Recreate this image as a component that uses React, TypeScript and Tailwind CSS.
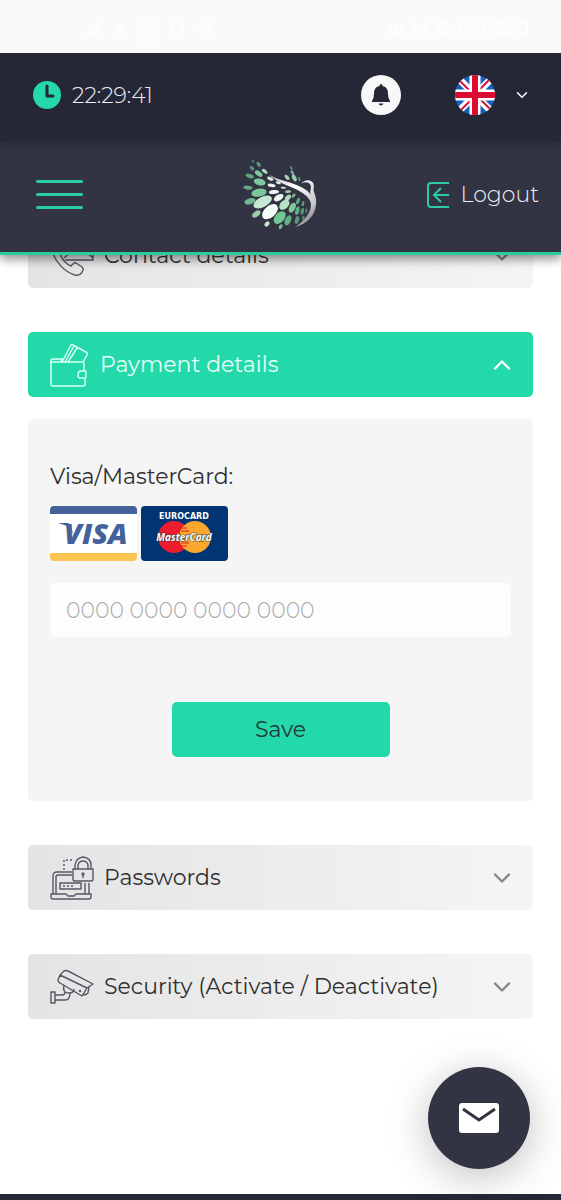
import type { ReactNode } from "react";
import { AlarmClock, BellOff, ChevronDown, ChevronUp, Eye, MapPin, Shield, Signal, Wifi } from "lucide-react";

// cx, cy, rx, ry, rotation, fill
const feathers: [number, number, number, number, number, string][] = [
  [69, 49, 5, 3, 55, "#4f7d6e"],
  [86, 58, 8, 5, 50, "#5e9c7e"],
  [66, 70, 8, 5, 40, "#5b8f7b"],
  [104, 79, 10, 5, 40, "#a9d9ba"],
  [86, 86, 13, 7, 35, "#7fc79d"],
  [59, 93, 13, 6, 20, "#5da581"],
  [121, 101, 10, 5, 25, "#d9efe0"],
  [89, 111, 18, 10, 15, "#7ccb9c"],
  [54, 128, 14, 6, 5, "#66a787"],
  [125, 121, 12, 5, 10, "#e8f5ec"],
  [145, 113, 8, 4, 15, "#e4eee8"],
  [160, 128, 8, 3, 5, "#d4e5da"],
  [87, 143, 23, 12, -10, "#79c899"],
  [132, 141, 15, 6, -5, "#f1faf4"],
  [60, 169, 17, 9, -15, "#6db991"],
  [174, 140, 9, 4, -5, "#a5cdb5"],
  [146, 158, 16, 9, -30, "#eaf7ee"],
  [98, 171, 30, 15, -28, "#c5e9d1"],
  [174, 158, 11, 7, -45, "#aedabc"],
  [163, 179, 18, 12, -45, "#b4e2c3"],
  [120, 200, 28, 17, -42, "#f5fdf7"],
  [79, 207, 14, 8, -35, "#9bcdad"],
  [191, 152, 7, 4, -50, "#84b697"],
  [187, 188, 16, 9, -62, "#82c79a"],
  [204, 168, 10, 5, -70, "#67a981"],
  [149, 218, 22, 14, -48, "#72c693"],
  [111, 237, 9, 6, -45, "#c3e6cf"],
  [202, 197, 13, 6, -75, "#5faf7f"],
  [219, 176, 8, 4, -80, "#5b9b76"],
  [174, 226, 16, 9, -65, "#63ae82"],
  [152, 245, 8, 5, -60, "#76bc91"],
  [217, 199, 10, 5, -80, "#5a9876"],
  [229, 197, 8, 3, -85, "#4d8269"],
  [201, 225, 12, 6, -75, "#59977a"],
  [220, 219, 7, 4, -80, "#4f8a6d"],
  [184, 69, 6, 3, 55, "#62917c"],
  [187, 83, 8, 4, 60, "#80af95"],
  [171, 97, 9, 5, 50, "#a5d2b6"],
  [193, 99, 11, 6, 65, "#99d0ae"],
  [208, 102, 7, 3, 75, "#63997d"],
];

function Logo() {
  return (
    <svg viewBox="36 42 228 216" className="h-[72px] w-[76px]" role="img" aria-label="Home">
      <defs>
        <linearGradient id="wing" x1="0" y1="0" x2="1" y2="1">
          <stop offset="0" stopColor="#c7c7cd" />
          <stop offset=".4" stopColor="#fff" />
          <stop offset=".75" stopColor="#c8c5cb" />
          <stop offset="1" stopColor="#444552" />
        </linearGradient>
      </defs>
      {feathers.map(([cx, cy, rx, ry, angle, fill]) => (
        <ellipse key={`${cx}-${cy}`} cx={cx} cy={cy} rx={rx} ry={ry} fill={fill} transform={`rotate(${angle} ${cx} ${cy})`} />
      ))}
      <path
        fill="url(#wing)"
        d="M118 88C135 103 165 108 192 117C218 126 237 138 242 150C238 138 246 128 241 119C236 110 224 110 214 116C222 104 240 102 248 112C255 122 249 132 252 142C258 155 261 172 256 192C250 214 232 236 196 246C222 228 242 206 243 180C243 160 222 143 190 129C160 117 132 106 118 88Z"
      />
    </svg>
  );
}

function PhoneIcon() {
  return (
    <svg viewBox="0 0 44 44" className="h-11 w-11" fill="none" stroke="#565765" strokeWidth="1.4" strokeLinejoin="round">
      <path d="M2 17c3 10 12 21 23 24 5 1 7-2 8-5 1-1 0-2-1-3l-6-4c-2-1-3 1-5 3-5-2-9-7-11-12l3-4-4-9c-5 1-8 4-7 10Z" />
      <path d="M14 4h29v22H15M14 24l9-8m20 8-9-8M15 5l14 13L42 5" />
    </svg>
  );
}

function WalletIcon() {
  return (
    <svg viewBox="0 0 40 44" className="h-11 w-10" fill="none" stroke="#d5fff3" strokeWidth="1.5" strokeLinejoin="round" strokeLinecap="round">
      <path d="M34 28v-7q0-2-2-2H1v22q0 2 2 2h30q2 0 2-2v-5" />
      <path d="M1 19v-2q0-1 2-1h9M12 19l9-17q1-1 2 0l13 7q2 1 1 3l-4 7M15 19l9-16M18 19l9-14M12 16l-1 3" />
      <path d="M30 28h5q1 0 1 1v5q0 1-1 1h-5q-2 0-2-3t2-4Z" />
    </svg>
  );
}

function LaptopLockIcon() {
  return (
    <svg viewBox="0 0 44 44" className="h-11 w-11" fill="none" stroke="#565765" strokeWidth="1.4" strokeLinejoin="round">
      <path d="M3 38V20q0-4 4-4h15M6 38V21q0-2 2-2h14M35 27v11m4-11v11M1 38h15l2 2h6l2-2h15v3q0 2-2 2H3q-2 0-2-2Z" />
      <path d="M10 27h21v6H10Z" />
      <path d="M13 30h12M14 14V4h10" strokeDasharray="2 2" />
      <path d="M23 13h20v10q0 2-2 2H25q-2 0-2-2ZM25 13V9q1-7 8-8 8 1 8 8v4M28 13V9q1-4 5-4t5 4v4" />
      <circle cx="33" cy="18" r="1" />
      <path d="M33 19v3" />
    </svg>
  );
}

function CameraIcon() {
  return (
    <svg viewBox="0 0 44 44" className="h-11 w-11" fill="none" stroke="#565765" strokeWidth="1.4" strokeLinejoin="round">
      <path d="M14 6q2-1 4 0l25 13-6 4L10 10l4-4ZM10 10l-2 5q0 2 2 3l22 13 5-8M39 22l-1 6q-2 2-5 2" />
      <path d="M14 20q-2 8 5 8 5 0 5-4M1 27h4v11H1ZM5 30h7q3 0 3-3M5 35h10q5 0 5-7" />
      <circle cx="30" cy="26" r=".5" />
    </svg>
  );
}

function UkFlag() {
  return (
    <svg viewBox="0 0 40 40" className="h-10 w-10" aria-hidden="true">
      <clipPath id="round">
        <circle cx="20" cy="20" r="20" />
      </clipPath>
      <g clipPath="url(#round)">
        <path fill="#1560bd" d="M0 0h40v40H0Z" />
        <path stroke="#fff" strokeWidth="7" d="m0 0 40 40M40 0 0 40" />
        <path stroke="#d9123a" strokeWidth="2" d="m0 1 19 19m21 19L21 20M39 0 20 19M1 40l19-19" />
        <path stroke="#fff" strokeWidth="11" d="M20 0v40M0 20h40" />
        <path stroke="#dc0b32" strokeWidth="6" d="M20 0v40M0 20h40" />
      </g>
    </svg>
  );
}

function VisaCard() {
  return (
    <svg viewBox="0 0 87 55" className="h-[55px] w-[87px] rounded" role="img" aria-label="Visa">
      <path fill="#fff" d="M0 0h87v55H0Z" />
      <path fill="#43619b" d="M0 0h87v8H0Z" />
      <path fill="#fbc550" d="M0 47h87v8H0Z" />
      <path fill="#43619b" d="M8 17h9q3 0 4 3l2 8-3-5q-3-4-12-6Z" />
      <text x="14" y="38" fontFamily="Open Sans, sans-serif" fontSize="29" fontWeight="800" fontStyle="italic" fill="#43619b">
        VISA
      </text>
    </svg>
  );
}

function MasterCard() {
  return (
    <svg viewBox="0 0 87 55" className="h-[55px] w-[87px] rounded" role="img" aria-label="MasterCard">
      <path fill="#003473" d="M0 0h87v55H0Z" />
      <text x="43" y="13" textAnchor="middle" fontFamily="DejaVu Sans, sans-serif" fontSize="8" fontWeight="700" fill="#fff">
        EUROCARD
      </text>
      <circle cx="33" cy="31" r="16" fill="#ed1c2e" />
      <circle cx="54" cy="31" r="16" fill="#faa82d" />
      <path stroke="#ed1c2e" d="M40 22h6m-6 3h8m-8 12h8m-8 3h6" />
      <text x="43" y="35" textAnchor="middle" fontFamily="Open Sans, sans-serif" fontSize="10" fontWeight="700" fontStyle="italic" fill="#fff" stroke="#30333b" strokeWidth="1" paintOrder="stroke">
        MasterCard
      </text>
    </svg>
  );
}

function Section({ icon, title, open = false }: { icon: ReactNode; title: string; open?: boolean }) {
  const Chevron = open ? ChevronUp : ChevronDown;
  return (
    <button
      type="button"
      aria-expanded={open}
      className={`flex h-[65px] w-full items-center gap-[10px] rounded-[5px] px-[22px] text-left text-[22px] font-normal ${
        open ? "bg-[#24d9a9] text-[#e6fff8]" : "bg-linear-to-r from-[#e4e4e4] to-[#f5f5f5] text-[#303030]"
      }`}
    >
      {icon}
      <span className="flex-1">{title}</span>
      <Chevron className={`-mr-[5px] h-7 w-7 ${open ? "text-white" : "text-[#858585]"}`} strokeWidth={2} />
    </button>
  );
}

export default function App() {
  return (
    <div className="flex min-h-screen flex-col bg-white font-['Montserrat','Inter',sans-serif] font-light">
      {/* Phone status bar */}
      <div className="relative z-20 flex h-[53px] items-end justify-between bg-[#fafafa] pr-8 pb-2 pl-20 text-white">
        <div className="flex items-center gap-3">
          <Signal className="h-5 w-5" />
          <Wifi className="h-4 w-4" />
          <div className="flex flex-col items-center text-[11px] leading-4 font-medium">
            <span>156</span>
            <span>K/s</span>
          </div>
          <Shield className="h-4 w-4" />
          <MapPin className="h-4 w-4" />
        </div>
        <div className="flex h-8 items-center gap-2">
          <Eye className="h-4 w-4" />
          <AlarmClock className="h-4 w-4" />
          <BellOff className="h-4 w-4" />
          <span className="rounded border border-white px-1 text-xs leading-3 font-medium">46</span>
          <span className="text-lg leading-5 font-medium">5:29</span>
        </div>
      </div>

      <header className="relative z-10 border-b-[3px] border-[#2bcb9f] bg-[#333443] shadow-[0_4px_10px_rgba(0,0,0,0.45)]">
        <div className="flex h-[88px] items-center bg-[#252736] pr-[30px] pb-1 pl-[33px] text-white shadow-[0_2px_8px_rgba(0,0,0,0.3)]">
          <svg viewBox="0 0 28 28" className="h-7 w-7" aria-hidden="true">
            <circle cx="14" cy="14" r="14" fill="#24d9a9" />
            <path d="M14 5v10h6" fill="none" stroke="#252736" strokeWidth="3" strokeLinecap="round" strokeLinejoin="round" />
          </svg>
          <time className="ml-[11px] text-[22px] text-[#eeeef4]">22:29:41</time>
          <button type="button" aria-label="Notifications" className="ml-auto flex h-10 w-10 items-center justify-center rounded-full bg-[#f8f8f8]">
            <svg viewBox="0 0 20 24" className="h-6 w-5" fill="#252736" aria-hidden="true">
              <path d="M10 1q1.500 0 1.500 2C16 4 17 7 17 11q0 4 2 7v1H1v-1q2-3 2-7c0-4 1-7 5.500-8Q8.500 1 10 1ZM7.500 20.500h5q-1 2-2.500 2t-2.500-2Z" />
            </svg>
          </button>
          <button type="button" aria-label="Language" className="ml-[54px] flex items-center gap-[18px]">
            <UkFlag />
            <ChevronDown className="h-[18px] w-[18px]" strokeWidth={2} />
          </button>
        </div>
        <div className="grid h-[111px] grid-cols-3 items-center px-[22px] pb-1">
          <button type="button" aria-label="Menu" className="ml-[14px] flex w-[47px] flex-col gap-[10px]">
            <span className="h-[3px] w-full rounded bg-[#29cda2]"></span>
            <span className="h-[3px] w-full rounded bg-[#29cda2]"></span>
            <span className="h-[3px] w-full rounded bg-[#29cda2]"></span>
          </button>
          <a href="#" className="justify-self-center">
            <Logo />
          </a>
          <a href="#" className="flex items-center gap-3 justify-self-end text-[22px] text-[#eeeef4]">
            <svg viewBox="0 0 22 26" className="h-[26px] w-[22px]" fill="none" stroke="#2bcca1" strokeWidth="2" aria-hidden="true">
              <path d="M22 1H4Q1 1 1 4v18q0 3 3 3h18M22 13H7m7-7-7 7 7 7" />
            </svg>
            Logout
          </a>
        </div>
      </header>

      <main className="-mt-8 flex flex-1 flex-col gap-11 px-7">
        <Section icon={<PhoneIcon />} title="Contact details" />
        <div className="flex flex-col gap-[22px]">
          <Section icon={<WalletIcon />} title="Payment details" open />
          <form className="flex flex-col rounded-[5px] bg-[#f5f5f5] px-[22px] pt-10 pb-11">
            <label htmlFor="card" className="text-[22px] leading-9 font-normal text-[#303030]">
              Visa/MasterCard:
            </label>
            <div className="mt-[11px] flex gap-1">
              <VisaCard />
              <MasterCard />
            </div>
            <input
              id="card"
              type="text"
              inputMode="numeric"
              placeholder="0000 0000 0000 0000"
              className="mt-[22px] h-[54px] w-full rounded-[5px] bg-[#fdfdfd] px-4 text-[22px] placeholder:text-[#aaaaaa]"
            />
            <button type="submit" className="mt-[65px] h-[55px] w-[218px] self-center rounded-[5px] bg-[#24d9a9] text-[22px] font-normal text-[#23363a]">
              Save
            </button>
          </form>
        </div>
        <Section icon={<LaptopLockIcon />} title="Passwords" />
        <Section icon={<CameraIcon />} title="Security (Activate / Deactivate)" />
      </main>

      <button
        type="button"
        aria-label="Send a message"
        className="fixed right-[31px] bottom-[31px] flex h-[102px] w-[102px] items-center justify-center rounded-full bg-[#333443] shadow-[0_8px_40px_rgba(0,0,0,0.25)]"
      >
        <svg viewBox="0 0 40 30" className="h-[30px] w-10" aria-hidden="true">
          <rect width="40" height="30" rx="3" fill="#fff" />
          <path d="m4 6 16 11L36 6" fill="none" stroke="#333443" strokeWidth="3" />
        </svg>
      </button>
      <footer className="relative h-[6px] bg-[#252736]"></footer>
    </div>
  );
}
